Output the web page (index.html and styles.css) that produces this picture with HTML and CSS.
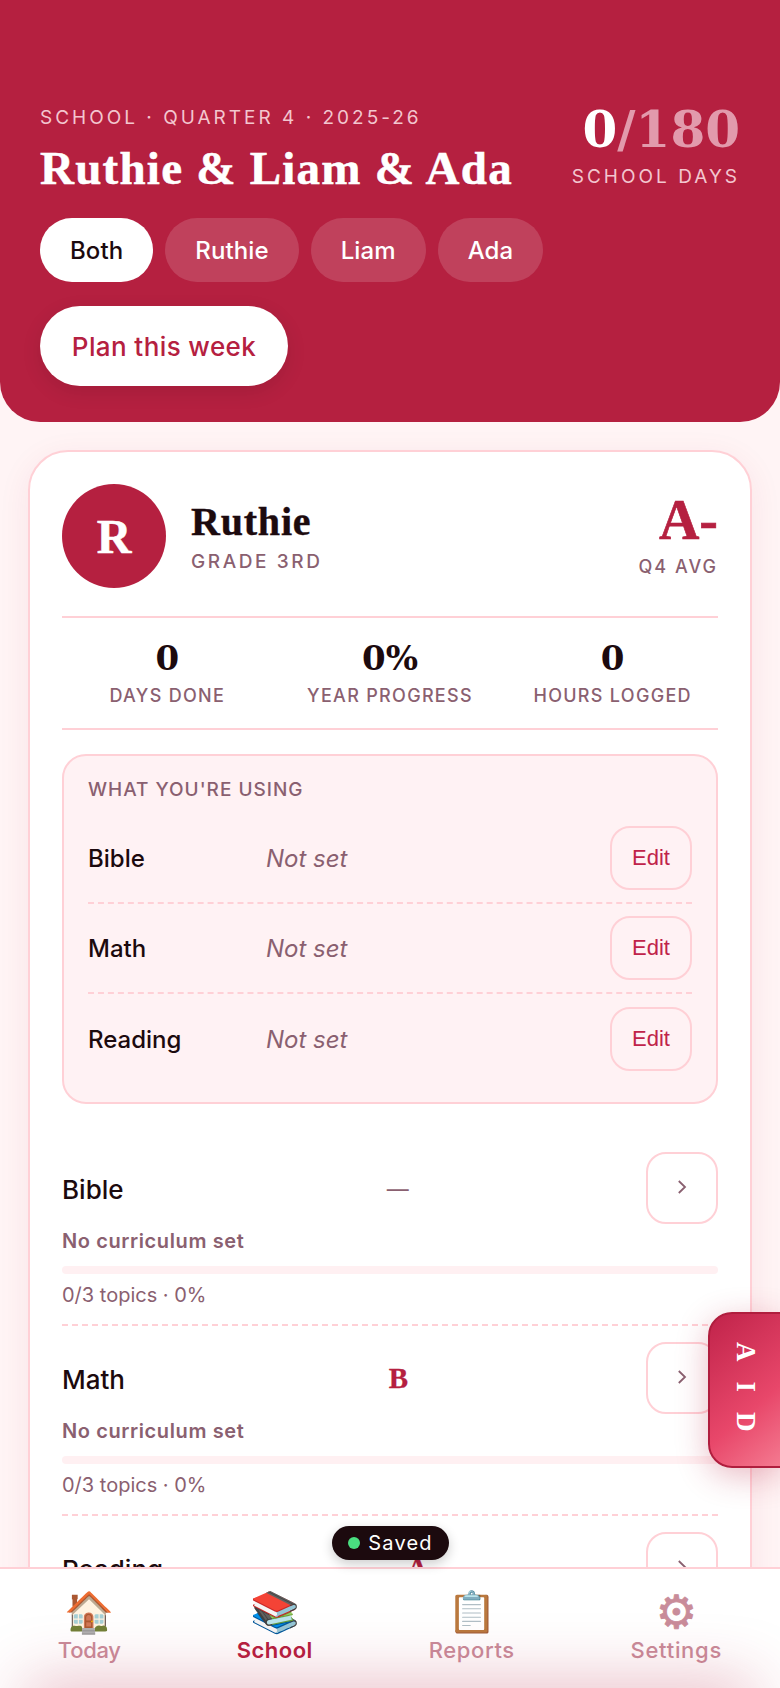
FILE: index.html
```html
<!DOCTYPE html>
<html lang="en">
<head>
<meta charset="utf-8">
<title>School</title>
<link rel="stylesheet" href="styles.css">
</head>
<body>
<div class="app">
  <header class="hero">
    <div class="hero-top">
      <div>
        <div class="eyebrow">SCHOOL · QUARTER 4 · 2025-26</div>
        <h1 class="title">Ruthie &amp; Liam &amp; Ada</h1>
      </div>
      <div class="count">
        <div class="count-num">0<span class="count-of">/180</span></div>
        <div class="count-label">SCHOOL DAYS</div>
      </div>
    </div>
    <div class="pills">
      <button class="pill active">Both</button>
      <button class="pill">Ruthie</button>
      <button class="pill">Liam</button>
      <button class="pill">Ada</button>
    </div>
    <button class="plan">Plan this week</button>
  </header>

  <main class="card">
    <div class="student">
      <div class="avatar">R</div>
      <div class="student-info">
        <div class="student-name">Ruthie</div>
        <div class="student-grade">GRADE 3RD</div>
      </div>
      <div class="avg">
        <div class="avg-grade">A-</div>
        <div class="avg-label">Q4 AVG</div>
      </div>
    </div>
    <div class="stats">
      <div class="stat"><div class="stat-num">0</div><div class="stat-label">DAYS DONE</div></div>
      <div class="stat"><div class="stat-num">0%</div><div class="stat-label">YEAR PROGRESS</div></div>
      <div class="stat"><div class="stat-num">0</div><div class="stat-label">HOURS LOGGED</div></div>
    </div>
    <section class="using">
      <div class="using-title">WHAT YOU'RE USING</div>
      <div class="using-row"><span class="using-name">Bible</span><span class="using-val">Not set</span><button class="edit">Edit</button></div>
      <div class="using-row"><span class="using-name">Math</span><span class="using-val">Not set</span><button class="edit">Edit</button></div>
      <div class="using-row"><span class="using-name">Reading</span><span class="using-val">Not set</span><button class="edit">Edit</button></div>
    </section>
    <section class="subjects">
      <div class="subject">
        <div class="subject-head"><span class="subject-name">Bible</span><span class="subject-dash">—</span><button class="go"><svg viewBox="0 0 12 16" class="chev"><path d="M2.8 2 L9 8 L2.8 14"/></svg></button></div>
        <div class="subject-cur">No curriculum set</div>
        <div class="track"></div>
        <div class="subject-meta">0/3 topics · 0%</div>
      </div>
      <div class="subject">
        <div class="subject-head"><span class="subject-name">Math</span><span class="subject-grade">B</span><button class="go"><svg viewBox="0 0 12 16" class="chev"><path d="M2.8 2 L9 8 L2.8 14"/></svg></button></div>
        <div class="subject-cur">No curriculum set</div>
        <div class="track"></div>
        <div class="subject-meta">0/3 topics · 0%</div>
      </div>
      <div class="subject">
        <div class="subject-head"><span class="subject-name">Reading</span><span class="subject-grade">A</span><button class="go"><svg viewBox="0 0 12 16" class="chev"><path d="M2.8 2 L9 8 L2.8 14"/></svg></button></div>
      </div>
    </section>
  </main>

  <button class="aid">AID</button>
  <div class="toast"><span class="dot"></span>Saved</div>

  <nav class="nav">
    <div class="nav-item today"><span class="nav-icon">🏠</span><span class="nav-label">Today</span></div>
    <div class="nav-item current"><span class="nav-icon">📚</span><span class="nav-label">School</span></div>
    <div class="nav-item reports"><span class="nav-icon">📋</span><span class="nav-label">Reports</span></div>
    <div class="nav-item settings"><span class="nav-icon gear">&#x2699;&#xFE0E;</span><span class="nav-label">Settings</span></div>
  </nav>
</div>
</body>
</html>
```

FILE: styles.css
```css
* { box-sizing: border-box; }
html, body { margin: 0; height: 100%; }
body {
  background: #fff4f5;
  font-family: Inter, "Noto Sans", sans-serif;
  color: #1c0a0e;
  overflow: hidden;
}
button { padding: 0; margin: 0; }
.app { position: relative; width: 780px; height: 1688px; overflow: hidden; }

.hero {
  height: 422px;
  padding: 105px 40px 0;
  background: #b52040;
  border-radius: 0 0 40px 40px;
}
.hero-top { display: flex; justify-content: space-between; align-items: flex-start; }
.eyebrow {
  font-size: 19px;
  line-height: 26px;
  letter-spacing: 3px;
  color: #f3c6cf;
}
.title {
  margin: 9px 0 0;
  font: 700 47px/56px "Liberation Serif", serif;
  letter-spacing: 1.25px;
  -webkit-text-stroke: .5px #fff;
  color: #fff;
}
.count { text-align: right; }
.count-num {
  font: 700 50px/50px "DejaVu Serif", serif;
  color: #fff;
}
.count-of { color: #e29aac; }
.count-label {
  margin-top: 9px;
  font-size: 19px;
  line-height: 26px;
  letter-spacing: 3px;
  color: #f3c6cf;
}
.pills { display: flex; gap: 12px; margin-top: 22px; }
.pill {
  height: 64px;
  padding: 0 30px;
  border: 0;
  border-radius: 32px;
  background: rgba(255, 255, 255, .15);
  color: #fff;
  font: 500 24px Inter, sans-serif;
  letter-spacing: .1px;
}
.pill.active { background: #fff; color: #1c0a0e; }
.plan {
  display: block;
  margin-top: 24px;
  width: 248px;
  height: 80px;
  border: 0;
  border-radius: 40px;
  background: #fff;
  color: #b52040;
  font: 500 26px Inter, sans-serif;
  letter-spacing: .4px;
  box-shadow: 0 6px 20px rgba(0, 0, 0, .1);
}

.card {
  margin: 28px 28px 0;
  padding: 32px 32px 0;
  background: #fff;
  border: 2px solid #ffd0d6;
  border-radius: 40px;
  height: 1400px;
  box-shadow: 0 8px 32px rgba(181, 32, 64, .08);
}
.student {
  display: flex;
  align-items: center;
  height: 104px;
}
.avatar {
  width: 104px;
  height: 104px;
  border-radius: 50%;
  background: #b52040;
  color: #fff;
  display: flex;
  align-items: center;
  justify-content: center;
  font: 700 48px "Liberation Serif", serif;
  -webkit-text-stroke: .5px #fff;
  flex: none;
}
.student-info { margin-left: 25px; flex: 1; }
.student-name {
  font: 700 40px/48px "Liberation Serif", serif;
  letter-spacing: .8px;
  -webkit-text-stroke: .4px #1c0a0e;
  color: #1c0a0e;
}
.student-grade {
  margin-top: 3px;
  font-size: 19px;
  line-height: 26px;
  letter-spacing: 2.6px;
  color: #8a6070;
  font-weight: 500;
}
.avg { text-align: right; }
.avg-grade {
  font: 700 56px/56px "Liberation Serif", serif;
  -webkit-text-stroke: .6px #b52040;
  color: #b52040;
}
.avg-label {
  margin-top: 6px;
  font-size: 18px;
  line-height: 26px;
  letter-spacing: 2px;
  color: #8a6070;
  font-weight: 500;
}

.stats {
  display: grid;
  grid-template-columns: repeat(3, 1fr);
  gap: 12px;
  margin-top: 28px;
  padding: 18px 0 20px;
  border-top: 2px solid #ffd0d6;
  border-bottom: 2px solid #ffd0d6;
}
.stat { text-align: center; }
.stat-num { font: 700 34px/44px "DejaVu Serif", serif; color: #1c0a0e; }
.stat-label {
  margin-top: 4px;
  font-size: 18px;
  line-height: 24px;
  letter-spacing: 1.3px;
  color: #8a6070;
  font-weight: 500;
}

.using {
  margin-top: 24px;
  padding: 21px 24px 24px;
  background: #fff2f4;
  border: 2px solid #ffd0d6;
  border-radius: 24px;
  height: 350px;
}
.using-title {
  font-size: 19px;
  line-height: 26px;
  letter-spacing: 1px;
  font-weight: 500;
  color: #8a6070;
  margin-bottom: 11px;
}
.using-row {
  display: flex;
  align-items: center;
  height: 90px;
  border-bottom: 2px dashed #ffd0d6;
}
.using-row:last-child { border-bottom: 0; }
.using-name { width: 178px; font-size: 24px; font-weight: 500; color: #1c0a0e; }
.using-val { flex: 1; font-size: 24px; font-style: italic; color: #8a6070; }
.edit {
  width: 82px;
  height: 64px;
  border: 2px solid #ffd0d6;
  border-radius: 20px;
  background: transparent;
  color: #c0234a;
  font: 400 22px "Liberation Sans", sans-serif;
}

.subjects { margin-top: 32px; }
.subject {
  height: 190px;
  padding-top: 16px;
  border-bottom: 2px dashed #ffd0d6;
}
.subject:last-child { border-bottom: 0; }
.subject-head {
  display: flex;
  justify-content: space-between;
  align-items: center;
  height: 72px;
}
.subject-name { padding-top: 2px; font-size: 26px; font-weight: 500; color: #1c0a0e; }
.subject-dash { padding-top: 2px; font-size: 22px; color: #8a6070; }
.subject-grade {
  font: 700 29px "Liberation Serif", serif;
  -webkit-text-stroke: .3px #b52040;
  color: #b52040;
}
.go {
  width: 72px;
  height: 72px;
  margin-left: -26px;
  border: 2px solid #ffd0d6;
  border-radius: 20px;
  background: #fff;
  display: flex;
  align-items: center;
  justify-content: center;
}
.chev { width: 12px; height: 16px; fill: none; stroke: #8a6070; stroke-width: 1.8; margin-top: -2px; }
.subject-cur {
  margin-top: 4px;
  font-size: 20px;
  line-height: 26px;
  font-weight: 600;
  letter-spacing: .6px;
  color: #8a6070;
}
.track { height: 8px; margin-top: 12px; border-radius: 4px; background: #fff0f2; }
.subject-meta { margin-top: 7px; font-size: 20px; line-height: 28px; color: #8a6070; }

.aid {
  position: absolute;
  right: -2px;
  top: 1312px;
  width: 74px;
  height: 156px;
  padding-top: 14px;
  border: 2px solid #b01e3e;
  border-radius: 24px 0 0 24px;
  background: linear-gradient(140deg, #c0234a 0%, #e8476a 62%, #f47a90 100%);
  color: #fff;
  font: 700 27px "Liberation Serif", serif;
  letter-spacing: 20px;
  writing-mode: vertical-rl;
  box-shadow: 0 8px 32px rgba(181, 32, 64, .3);
}

.toast {
  position: absolute;
  left: 332px;
  top: 1526px;
  width: 117px;
  height: 34px;
  border-radius: 17px;
  background: #1c0a0e;
  color: #fff;
  display: flex;
  align-items: center;
  justify-content: center;
  gap: 8px;
  font-size: 20px;
  letter-spacing: 1.2px;
  box-shadow: 0 4px 12px rgba(0, 0, 0, .2);
  z-index: 3;
}
.dot { width: 12px; height: 12px; border-radius: 50%; background: #4ade80; }

.nav {
  position: absolute;
  left: 0;
  right: 0;
  bottom: 0;
  height: 121px;
  display: flex;
  justify-content: space-around;
  align-items: flex-start;
  padding-top: 20px;
  background: #fff;
  border-top: 2px solid #ffd0d6;
  overflow: hidden;
}
.nav::after {
  content: "";
  position: absolute;
  left: 30px;
  right: 30px;
  top: 100%;
  height: 40px;
  box-shadow: 0 0 64px 4px rgba(181, 32, 64, .34);
}
.nav-item { display: flex; flex-direction: column; align-items: center; white-space: nowrap; }
.today { width: 62px; }
.current { width: 76px; }
.reports { width: 85px; }
.settings { width: 91px; }
.nav-icon { font-size: 40px; line-height: 46px; }
.gear {
  font-family: "DejaVu Sans", sans-serif;
  font-size: 46px;
  color: #c98c9a;
  -webkit-text-stroke: .8px #c98c9a;
}
.nav-label {
  margin-top: 1px;
  font-size: 22px;
  line-height: 28px;
  font-weight: 500;
  letter-spacing: .3px;
  color: #c98c9a;
}
.today .nav-label { letter-spacing: -.3px; }
.reports .nav-label { letter-spacing: .6px; }
.settings .nav-label { letter-spacing: .7px; }
.current .nav-label { color: #b52040; font-weight: 600; letter-spacing: .5px; }
```
